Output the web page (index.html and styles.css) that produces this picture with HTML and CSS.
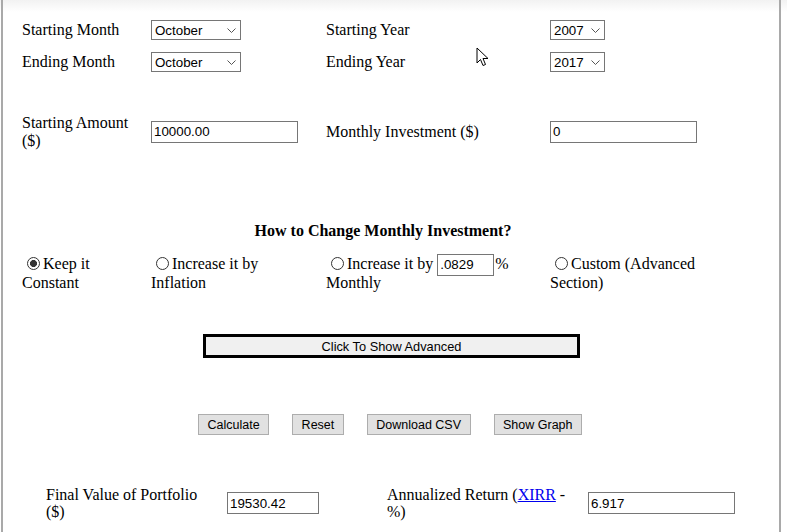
FILE: index.html
```html
<!DOCTYPE html>
<html lang="en">
<head>
    <meta charset="UTF-8">
    <meta name="viewport" content="width=device-width, initial-scale=1.0">
    <title>Investment Return Calculator</title>
    <link rel="stylesheet" href="styles.css">
</head>
<body>
    <div class="calc-container">
        <div class="period-grid">
            <label class="field-label">Starting Month</label>
            <div class="select-wrap month-select">
                <select><option>October</option></select>
                <svg class="chev" width="9" height="5" viewBox="0 0 9 5"><path d="M0.5 0.5 L4.5 4.5 L8.5 0.5" fill="none" stroke="#555" stroke-width="1"/></svg>
            </div>
            <label class="field-label">Starting Year</label>
            <div class="select-wrap year-select">
                <select><option>2007</option></select>
                <svg class="chev" width="9" height="5" viewBox="0 0 9 5"><path d="M0.5 0.5 L4.5 4.5 L8.5 0.5" fill="none" stroke="#555" stroke-width="1"/></svg>
            </div>

            <label class="field-label">Ending Month</label>
            <div class="select-wrap month-select">
                <select><option>October</option></select>
                <svg class="chev" width="9" height="5" viewBox="0 0 9 5"><path d="M0.5 0.5 L4.5 4.5 L8.5 0.5" fill="none" stroke="#555" stroke-width="1"/></svg>
            </div>
            <label class="field-label">Ending Year</label>
            <div class="select-wrap year-select">
                <select><option>2017</option></select>
                <svg class="chev" width="9" height="5" viewBox="0 0 9 5"><path d="M0.5 0.5 L4.5 4.5 L8.5 0.5" fill="none" stroke="#555" stroke-width="1"/></svg>
            </div>

            <div class="spacer-row"></div>

            <label class="field-label">Starting Amount ($)</label>
            <div><input type="text" class="text-input amount-input" value="10000.00"></div>
            <label class="field-label">Monthly Investment ($)</label>
            <div><input type="text" class="text-input amount-input" value="0"></div>
        </div>

        <h3 class="section-title">How to Change Monthly Investment?</h3>

        <div class="mode-grid">
            <label class="mode-option constant-opt"><input type="radio" name="mode" checked>Keep it Constant</label>
            <label class="mode-option inflation-opt"><input type="radio" name="mode">Increase it by Inflation</label>
            <label class="mode-option monthly-opt"><input type="radio" name="mode">Increase it by <input type="text" class="text-input rate-input" value=".0829">% Monthly</label>
            <label class="mode-option custom-opt"><input type="radio" name="mode">Custom (Advanced Section)</label>
        </div>

        <div class="advanced-row">
            <button class="advanced-btn">Click To Show Advanced</button>
        </div>

        <div class="button-row">
            <button class="action-btn">Calculate</button>
            <button class="action-btn">Reset</button>
            <button class="action-btn">Download CSV</button>
            <button class="action-btn">Show Graph</button>
        </div>

        <div class="result-grid">
            <label class="field-label result-label final-label">Final Value of Portfolio ($)</label>
            <div><input type="text" class="text-input final-input" value="19530.42"></div>
            <label class="field-label result-label xirr-label">Annualized Return (<a href="#">XIRR</a> - %)</label>
            <div><input type="text" class="text-input xirr-input" value="6.917"></div>
        </div>

        <svg class="pointer" width="14" height="20" viewBox="0 0 14 20">
            <path d="M1 1 L1 16 L4.5 12.5 L7 18.5 L9.5 17.5 L7 11.5 L12 11.5 Z" fill="#fff" stroke="#000" stroke-width="1" stroke-linejoin="round"/>
        </svg>
    </div>
</body>
</html>
```

FILE: styles.css
```css
body {
    margin: 0;
    font-family: "Liberation Serif", "Times New Roman", serif;
    font-size: 16px;
    color: #000;
    background: linear-gradient(#f2f2f2, #fff 12px);
}

.calc-container {
    position: relative;
    margin-left: 1px;
    width: 780px;
    min-height: 532px;
    border-left: 2px solid #a9a9a9;
    border-right: 2px solid #a9a9a9;
    padding: 14px 0 0 19px;
    box-sizing: border-box;
}

.field-label {
    line-height: 18px;
}

.period-grid {
    display: grid;
    grid-template-columns: 129px 175px 224px 1fr;
    grid-template-rows: 32px 32px 34px 39px;
    align-items: center;
}

.period-grid .field-label {
    padding-right: 8px;
}

.spacer-row {
    grid-column: 1 / -1;
}

.select-wrap {
    position: relative;
    height: 20px;
}

.select-wrap select {
    appearance: none;
    -webkit-appearance: none;
    height: 20px;
    margin: 0;
    padding: 0 0 0 3px;
    border: 1px solid #767676;
    border-radius: 0;
    background: #fff;
    font-family: "Liberation Sans", Arial, sans-serif;
    font-size: 13.33px;
    color: #000;
}

.month-select select {
    width: 90px;
}

.year-select select {
    width: 55px;
}

.select-wrap .chev {
    position: absolute;
    top: 8px;
    pointer-events: none;
}

.month-select .chev {
    left: 76px;
}

.year-select .chev {
    left: 41px;
}

.text-input {
    height: 22px;
    margin: 0;
    padding: 0 2px;
    border: 1px solid #767676;
    box-sizing: border-box;
    font-family: "Liberation Sans", Arial, sans-serif;
    font-size: 13.33px;
    color: #000;
    vertical-align: middle;
}

.amount-input {
    width: 147px;
    display: block;
}

.section-title {
    margin: 71px 0 0 0;
    padding-right: 35px;
    text-align: center;
    font-size: 16px;
    line-height: 18px;
}

/* investment mode radios, each cell wraps like the old table */
.mode-grid {
    display: grid;
    grid-template-columns: 129px 175px 224px 150px;
    align-items: start;
    margin-top: 14px;
    line-height: 19px;
}

.constant-opt {
    width: 90px;
}

.inflation-opt {
    width: 125px;
}

.monthly-opt {
    width: 190px;
}

.custom-opt {
    width: 150px;
}

.mode-option input[type="radio"] {
    appearance: none;
    -webkit-appearance: none;
    width: 13px;
    height: 13px;
    margin: 3px 3px 0 5px;
    border: 1px solid #333;
    border-radius: 50%;
    background: #fff;
    box-sizing: border-box;
    vertical-align: -1px;
}

.mode-option input[type="radio"]:checked {
    background: radial-gradient(circle, #333 0 3.2px, #fff 3.8px);
}

.rate-input {
    width: 57px;
    vertical-align: baseline;
    margin: -3px 1px -3px 0;
}

.advanced-row {
    display: flex;
    justify-content: center;
    margin-top: 42px;
    padding-right: 18px;
}

.advanced-btn {
    width: 377px;
    height: 24px;
    border: 3px solid #000;
    background: #f0f0f0;
    font-family: "Liberation Sans", Arial, sans-serif;
    font-size: 12.8px;
    color: #000;
    padding: 0;
}

.button-row {
    display: flex;
    justify-content: center;
    gap: 23px;
    margin-top: 56px;
    padding-right: 21px;
}

.action-btn {
    height: 21px;
    padding: 0 8.5px;
    border: 1px solid #adadad;
    background: #e1e1e1;
    font-family: "Liberation Sans", Arial, sans-serif;
    font-size: 12.5px;
    color: #000;
}

.result-grid {
    display: grid;
    grid-template-columns: 181px 160px 201px 147px;
    align-items: center;
    margin: 49px 0 0 24px;
    height: 38px;
}

.result-label {
    line-height: 17px;
}

.final-label {
    width: 165px;
}

.xirr-label {
    width: 190px;
}

.result-label a {
    color: #0000ee;
}

.final-input {
    width: 92px;
    display: block;
}

.xirr-input {
    width: 147px;
    display: block;
}

.pointer {
    position: absolute;
    left: 473px;
    top: 47px;
}
```
